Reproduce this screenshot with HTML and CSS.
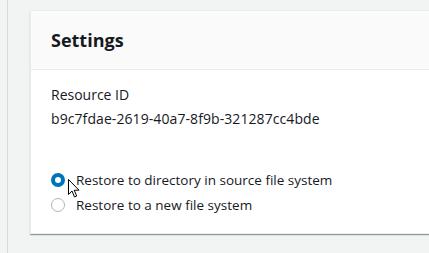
FILE: index.html
```html
<!DOCTYPE html>
<html lang="en">
<head>
  <meta charset="UTF-8">
  <title>Settings</title>
  <link rel="stylesheet" href="styles.css">
</head>
<body>
  <!-- Navigation edge -->
  <div class="nav-edge"></div>

  <!-- Main content -->
  <main class="main">
    <section class="card">
      <header class="card-header">
        <h2>Settings</h2>
      </header>

      <div class="card-body">
        <div class="field">
          <div class="field-label">Resource ID</div>
          <div class="field-value">b9c7fdae-2619-40a7-8f9b-321287cc4bde</div>
        </div>

        <div class="radio-group">
          <label class="radio">
            <span class="radio-dot checked"></span>
            <span>Restore to directory in source file system</span>
          </label>
          <label class="radio">
            <span class="radio-dot"></span>
            <span>Restore to a new file system</span>
          </label>
          <!-- Mouse pointer over the first option -->
          <svg class="cursor" width="12" height="19" viewBox="0 0 12 19">
            <path d="M0.5 0.5 L0.5 15.5 L4 12 L6.5 18 L8.7 17 L6.2 11.2 L11 11.2 Z" fill="#fff" stroke="#000" stroke-width="1" stroke-linejoin="round"/>
          </svg>
        </div>
      </div>
    </section>
  </main>
</body>
</html>
```

FILE: styles.css
```css
/* Page base */
body {
  display: flex;
  margin: 0;
  height: 253px;
  overflow: hidden;
  background-color: #f2f3f3;
  font-family: "Open Sans", "Noto Sans", sans-serif;
  color: #16191f;
}

/* Thin edge of the side navigation */
.nav-edge {
  width: 7px;
  flex: none;
  border-right: 1px solid #d5dbdb;
}

.main {
  flex: 1;
  padding: 10px 0 0 22px;
}

/* Container card */
.card {
  margin-right: -20px;
  background-color: #ffffff;
  border: 1px solid #eaeded;
  box-shadow: 0 1px 1px 0 rgba(0, 28, 36, 0.3), 1px 1px 1px 0 rgba(0, 28, 36, 0.15);
}

.card-header {
  padding: 19px 20px;
  background-color: #fafafa;
  border-bottom: 1px solid #eaeded;
}

.card-header h2 {
  margin: 0;
  font-size: 18px;
  line-height: 20px;
  font-weight: 700;
}

.card-body {
  padding: 14px 20px 17px;
  font-size: 14px;
  line-height: 22px;
}

.field-value {
  margin-top: 2px;
  letter-spacing: 0.08px;
}

/* Radio options */
.radio-group {
  position: relative;
  margin-top: 39px;
  display: flex;
  flex-direction: column;
  gap: 3px;
  font-size: 13.5px;
}

.radio {
  display: flex;
  align-items: center;
  gap: 11px;
}

.radio-dot {
  width: 14px;
  height: 14px;
  box-sizing: border-box;
  border: 1px solid #aab7b8;
  border-radius: 50%;
  background-color: #ffffff;
}

.radio-dot.checked {
  border: 4px solid #0073bb;
}

.cursor {
  position: absolute;
  left: 17px;
  top: 10px;
}
```
